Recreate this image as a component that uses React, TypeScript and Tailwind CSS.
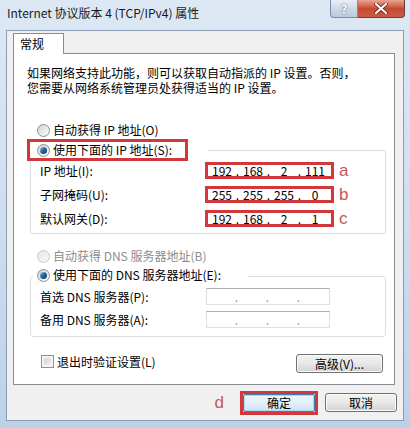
import React from "react";

const FONT = '"Noto Sans CJK SC", "Noto Sans", "Liberation Sans", sans-serif';

function Radio({ checked, disabled }: { checked?: boolean; disabled?: boolean }) {
  if (disabled) {
    return (
      <span className="flex h-[13px] w-[13px] shrink-0 items-center justify-center rounded-full border border-[#c9c9c9] bg-gradient-to-br from-[#e6e6e6] to-[#f8f8f8]" />
    );
  }
  return (
    <span className="flex h-[13px] w-[13px] shrink-0 items-center justify-center rounded-full border border-[#8e8f8f] bg-gradient-to-br from-[#d3d3d3] to-[#fcfcfc]">
      {checked && (
        <span className="h-[7px] w-[7px] rounded-full bg-gradient-to-br from-[#8cc3ea] via-[#22609c] to-[#0f3b68]" />
      )}
    </span>
  );
}

function Octets({ values, light }: { values: string[]; light?: boolean }) {
  return (
    <div className="flex h-full w-full items-center text-[12px] leading-[12px]">
      {values.map((v, i) => (
        <React.Fragment key={i}>
          <span className="flex w-[28px] justify-center">{v}</span>
          {i < 3 && (
            <span className={light ? "flex w-[3px] justify-center text-[#9a9a9a]" : "flex w-[3px] justify-center"}>.</span>
          )}
        </React.Fragment>
      ))}
    </div>
  );
}

function IpRow({ label, values, letter }: { label: string; values: string[]; letter: string }) {
  return (
    <div className="flex h-[17px] items-center">
      <div className="w-[174px] pl-[9px] text-[12px] leading-[17px] whitespace-nowrap">{label}</div>
      <div className="h-[17px] w-[129px] border-[3px] border-[#d3373c] bg-white">
        <Octets values={values} />
      </div>
      <div className="ml-[5px] text-[17px] font-light leading-[17px] text-[#c4585a]" style={{ fontFamily: '"Liberation Sans", sans-serif' }}>
        {letter}
      </div>
    </div>
  );
}

function DnsRow({ label }: { label: string }) {
  return (
    <div className="flex h-[17px] items-center">
      <div className="w-[175px] pl-[9px] text-[12px] leading-[17px] whitespace-nowrap">{label}</div>
      <div className="h-[17px] w-[124px] border border-[#dbdfe6] border-t-[#abadb3] bg-white">
        <Octets values={["", "", "", ""]} light />
      </div>
    </div>
  );
}

function Button({ children, className }: { children: React.ReactNode; className: string }) {
  return (
    <div
      className={
        "flex items-center justify-center rounded-[3px] border border-[#707070] bg-gradient-to-b from-[#f2f2f2] via-[#e8e8e8] to-[#d2d2d2] text-[12px] leading-[12px] shadow-[inset_0_0_0_1px_#fbfbfb] " +
        className
      }
    >
      {children}
    </div>
  );
}

export default function App() {
  return (
    <div
      className="flex h-[428px] w-[410px] flex-col overflow-hidden bg-gradient-to-b from-[#dde8f4] via-[#cfdef0] to-[#bcd1e8] text-black"
      style={{ fontFamily: FONT }}
    >
      {/* Title bar */}
      <div className="flex h-[30px] items-start">
        <div className="pl-[7px] pt-[5px] text-[12px] leading-[16px] whitespace-nowrap text-[#1a1a1a]">
          Internet 协议版本 4 (TCP/IPv4) 属性
        </div>
        <div className="ml-auto mr-[5px] flex">
          <div className="flex h-[18px] w-[28px] items-center justify-center rounded-bl-[4px] border border-t-0 border-[#7a8ea8] bg-gradient-to-b from-[#e9eff7] via-[#cdd9e8] to-[#b8c9de] text-[12px] font-bold leading-[12px] text-white [text-shadow:0_0_2px_#4a5a70]">
            ?
          </div>
          <div className="flex h-[18px] w-[47px] items-center justify-center rounded-br-[4px] border border-l-0 border-t-0 border-[#6b3a34] bg-gradient-to-b from-[#e8a493] via-[#c74a33] to-[#c95c45]">
            <svg width="14" height="11" viewBox="0 0 14 11">
              <path d="M2 1 L12 10 M12 1 L2 10" stroke="#5a1f14" strokeWidth="3.6" strokeLinecap="round" />
              <path d="M2 1 L12 10 M12 1 L2 10" stroke="#ffffff" strokeWidth="2.2" strokeLinecap="round" />
            </svg>
          </div>
        </div>
      </div>

      {/* Client area */}
      <div className="ml-[6px] flex h-[391px] w-[398px] flex-col border border-[#8a9db5] bg-[#f0f0f0]">
        {/* Tab */}
        <div className="relative z-10 mb-[-1px] ml-[6px] mt-[2px] h-[21px] w-[51px] border border-b-0 border-[#898c95] bg-white pl-[6px] text-[12px] leading-[19px]">
          常规
        </div>
        {/* Panel */}
        <div className="ml-[6px] flex h-[332px] w-[382px] flex-col border border-[#898c95] bg-white">
          <div className="ml-[13px] mt-[11px] text-[12px] leading-[15px] whitespace-nowrap">
            <div>如果网络支持此功能，则可以获取自动指派的 IP 设置。否则，</div>
            <div>您需要从网络系统管理员处获得适当的 IP 设置。</div>
          </div>

          {/* radio 1 */}
          <div className="ml-[23px] mt-[27px] flex h-[16px] items-center gap-[3px] text-[12px] leading-[16px]">
            <Radio />
            <span>自动获得 IP 地址(O)</span>
          </div>

          {/* IP group header */}
          <div className="relative z-10 ml-[13px] mt-[1px] flex w-fit bg-white">
            <div className="flex h-[22px] w-[161px] items-center gap-[3px] border-[3px] border-[#d3373c] bg-white pl-[7px] text-[12px] leading-[16px] whitespace-nowrap">
              <Radio checked />
              <span>使用下面的 IP 地址(S):</span>
            </div>
            <div className="w-[20px] bg-white" />
          </div>
          {/* IP group box */}
          <div className="ml-[16px] mt-[-11px] flex w-[356px] flex-col gap-[7px] rounded-[3px] border border-[#d5dfe5] pb-[6px] pt-[11px]">
            <IpRow label="IP 地址(I):" values={["192", "168", "2", "111"]} letter="a" />
            <IpRow label="子网掩码(U):" values={["255", "255", "255", "0"]} letter="b" />
            <IpRow label="默认网关(D):" values={["192", "168", "2", "1"]} letter="c" />
          </div>

          {/* radio 3 */}
          <div className="ml-[23px] mt-[14px] flex h-[16px] items-center gap-[3px] text-[12px] leading-[16px] text-[#8d8d8d]">
            <Radio disabled />
            <span>自动获得 DNS 服务器地址(B)</span>
          </div>

          {/* DNS header */}
          <div className="relative z-10 ml-[19px] mt-[3px] flex h-[16px] w-[215px] items-center gap-[3px] bg-white pl-[4px] text-[12px] leading-[16px] whitespace-nowrap">
            <Radio checked />
            <span>使用下面的 DNS 服务器地址(E):</span>
          </div>
          <div className="ml-[16px] mt-[-7px] flex w-[356px] flex-col gap-[6px] rounded-[3px] border border-[#d5dfe5] pb-[8px] pt-[11px]">
            <DnsRow label="首选 DNS 服务器(P):" />
            <DnsRow label="备用 DNS 服务器(A):" />
          </div>

          {/* checkbox row */}
          <div className="mt-[17px] flex items-start">
            <div className="ml-[27px] mt-[1px] flex h-[13px] items-center gap-[3px] text-[12px] leading-[13px] whitespace-nowrap">
              <span className="h-[13px] w-[13px] border border-[#8f8f8f] bg-gradient-to-br from-[#cfcfcf] to-[#f7f7f7] shadow-[inset_0_0_0_2px_#f4f4f4]" />
              <span>退出时验证设置(L)</span>
            </div>
            <Button className="ml-auto mr-[11px] h-[19px] w-[87px]">高级(V)...</Button>
          </div>
        </div>

        {/* bottom buttons */}
        <div className="flex flex-1 items-center justify-end pr-[6px]">
          <div className="mr-[16px] text-[17px] font-light leading-[17px] text-[#c4585a]" style={{ fontFamily: '"Liberation Sans", sans-serif' }}>
            d
          </div>
          <div className="h-[24px] w-[78px] border-[3px] border-[#d3373c]">
            <div className="flex h-full w-full items-center justify-center rounded-[2px] border border-[#3c7fb1] bg-gradient-to-b from-[#f0f7fc] via-[#e2eef8] to-[#cfe3f3] text-[12px] leading-[12px] shadow-[inset_0_0_0_1px_#a8d6f3]">
              确定
            </div>
          </div>
          <Button className="ml-[7px] h-[19px] w-[72px]">取消</Button>
        </div>
      </div>
    </div>
  );
}
